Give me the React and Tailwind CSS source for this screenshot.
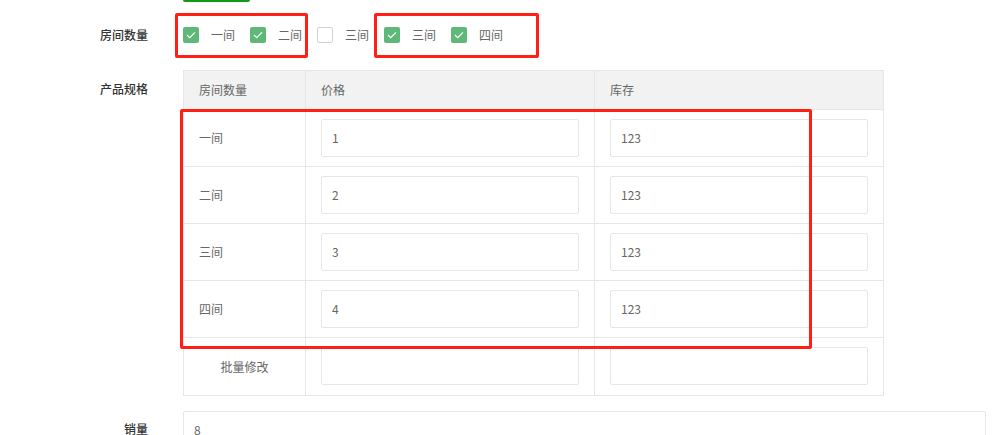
import React from 'react';

const rooms = [
  { name: '一间', checked: true },
  { name: '二间', checked: true },
  { name: '三间', checked: false },
  { name: '三间', checked: true },
  { name: '四间', checked: true },
];

const specs = [
  { name: '一间', price: '1', stock: '123' },
  { name: '二间', price: '2', stock: '123' },
  { name: '三间', price: '3', stock: '123' },
  { name: '四间', price: '4', stock: '123' },
];

const Check = ({ checked }) =>
  checked ? (
    <span className="flex items-center justify-center w-4 h-4 rounded-[2px] bg-[#5fb878]">
      <svg width="10" height="8" viewBox="0 0 10 8" fill="none">
        <path d="M1 4l2.7 2.6L9 1.3" stroke="#fff" strokeWidth="1.2" />
      </svg>
    </span>
  ) : (
    <span className="block w-4 h-4 rounded-[2px] border border-[#d2d2d2] bg-white" />
  );

const Input = ({ value }) => (
  <div className="h-[38px] border border-[#e6e6e6] rounded-[2px] pl-[10px] flex items-center text-[#666] bg-white">
    {value}
  </div>
);

const Cell = ({ children, className = '' }) => (
  <div className={`border-r border-b border-[#e6e6e6] px-[15px] py-[9px] ${className}`}>{children}</div>
);

const App = () => {
  return (
    <div
      className="relative w-[996px] h-[435px] overflow-hidden bg-white text-[12px] text-[#666]"
      style={{ fontFamily: '"Noto Sans CJK SC", "Liberation Sans", sans-serif' }}
    >
      <div className="ml-[183px] w-[67px] h-[2px] bg-[#139a13] rounded-b-[2px]" />

      {/* 房间数量 */}
      <div className="flex items-center mt-[15px] h-[36px]">
        <div className="w-[148px] text-right text-[#333] font-medium">房间数量</div>
        <div className="ml-[35px] flex items-center">
          {rooms.map((r, i) => (
            <div key={i} className="flex items-center mr-[15px]">
              <Check checked={r.checked} />
              <span className="ml-[12px] w-[24px] whitespace-nowrap">{r.name}</span>
            </div>
          ))}
        </div>
      </div>

      {/* 产品规格 */}
      <div className="flex mt-[17px]">
        <div className="w-[148px] text-right text-[#333] font-medium pt-[9px] leading-[20px]">产品规格</div>
        <div className="ml-[35px] border-l border-t border-[#e6e6e6] grid grid-cols-[122px_289px_289px]">
          <div className="col-span-3 grid grid-cols-[122px_289px_289px] bg-[#f2f2f2]">
            <Cell className="h-[39px] flex items-center">房间数量</Cell>
            <Cell className="h-[39px] flex items-center">价格</Cell>
            <Cell className="h-[39px] flex items-center">库存</Cell>
          </div>
          {specs.map((s, i) => (
            <React.Fragment key={i}>
              <Cell className="h-[57px] flex items-center">{s.name}</Cell>
              <Cell className="h-[57px]">
                <Input value={s.price} />
              </Cell>
              <Cell className="h-[57px]">
                <Input value={s.stock} />
              </Cell>
            </React.Fragment>
          ))}
          <Cell className="h-[58px] flex items-center justify-center">批量修改</Cell>
          <Cell className="h-[58px]">
            <Input value="" />
          </Cell>
          <Cell className="h-[58px]">
            <Input value="" />
          </Cell>
        </div>
      </div>

      {/* 销量 */}
      <div className="flex mt-[15px]">
        <div className="w-[148px] text-right text-[#333] font-medium pt-[8px] leading-[20px]">销量</div>
        <div className="ml-[35px] w-[803px]">
          <Input value="8" />
        </div>
      </div>

      {/* annotation boxes */}
      <div className="absolute left-[175px] top-[13px] w-[133px] h-[45px] border-[3px] border-[#ff1f14] rounded-[2px]" />
      <div className="absolute left-[374px] top-[13px] w-[165px] h-[45px] border-[3px] border-[#ff1f14] rounded-[2px]" />
      <div className="absolute left-[180px] top-[109px] w-[632px] h-[240px] border-[3px] border-[#ff1f14] rounded-[2px]" />
    </div>
  );
};

export default App;
